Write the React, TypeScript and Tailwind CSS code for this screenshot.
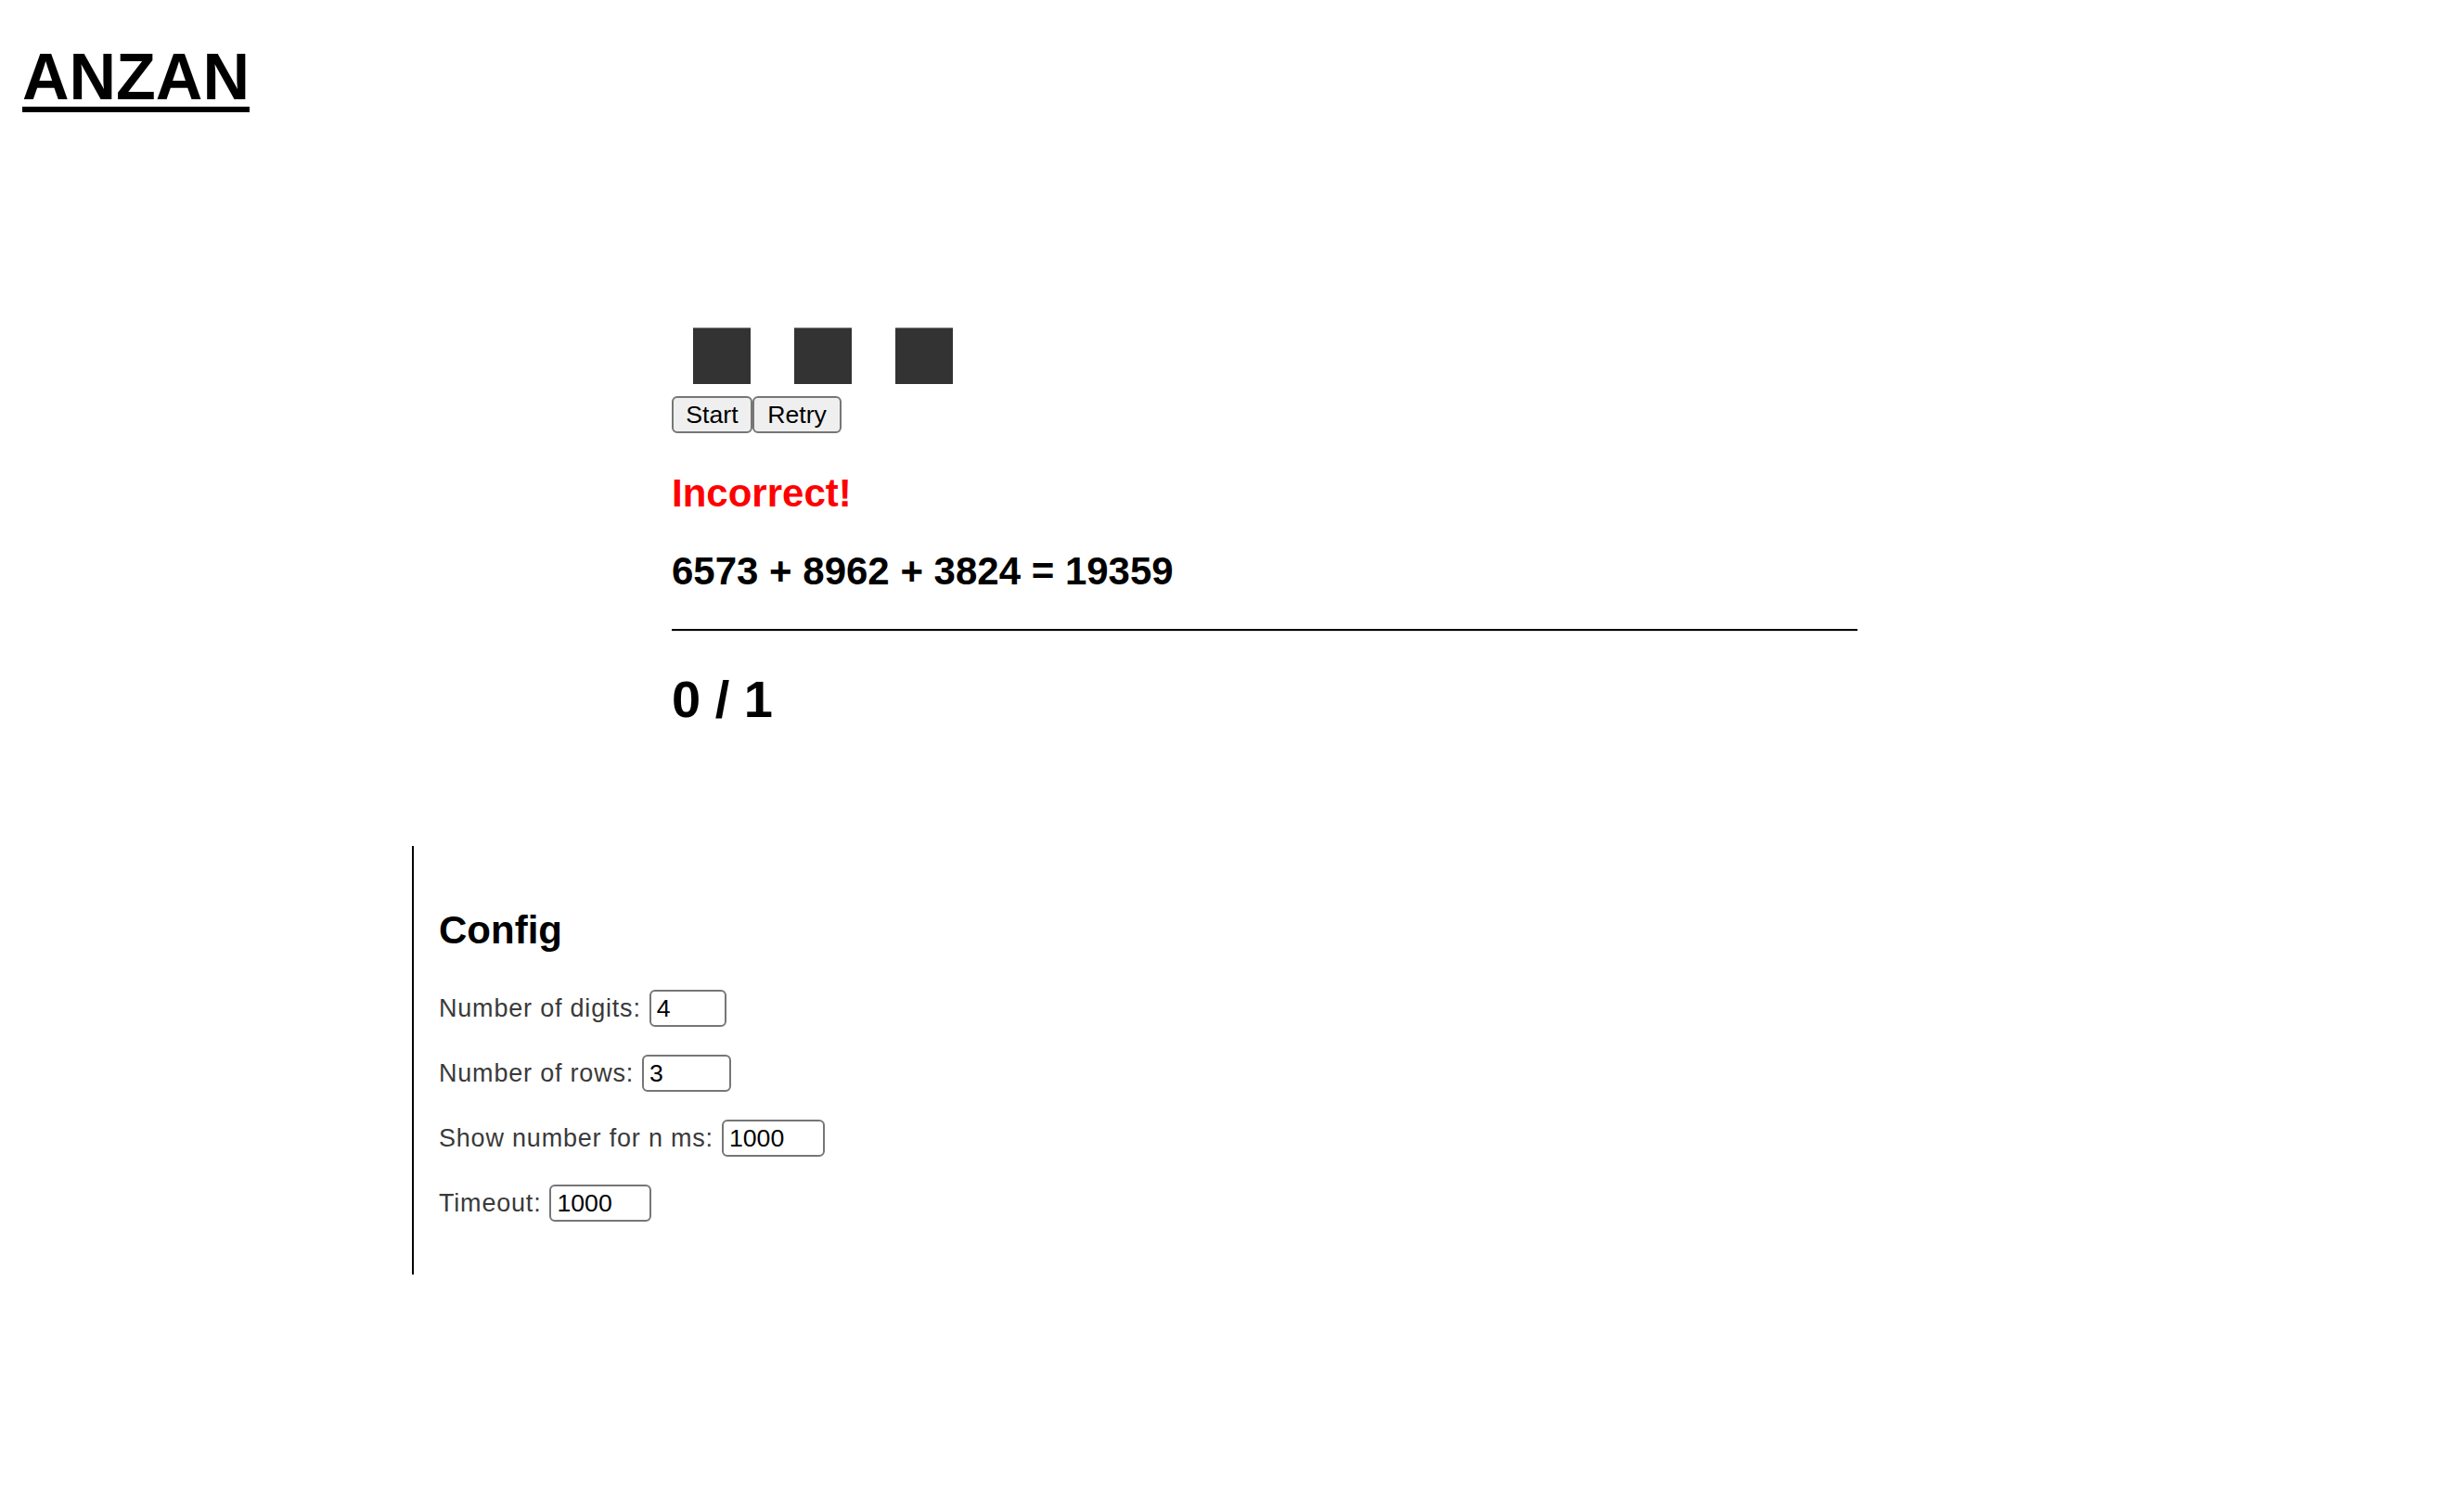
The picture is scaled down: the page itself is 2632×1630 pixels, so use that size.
const squares = [0, 1, 2];

const fields = [
  { label: "Number of digits:", value: "4", width: "w-[83px]" },
  { label: "Number of rows:", value: "3", width: "w-[96px]" },
  { label: "Show number for n ms:", value: "1000", width: "w-[111px]" },
  { label: "Timeout:", value: "1000", width: "w-[110px]" },
];

export default function App() {
  return (
    <div className="min-h-screen bg-white text-black font-['Liberation_Sans',Arial,sans-serif]">
      {/* Header */}
      <header className="pl-[24px] pt-[48px]">
        <h1 className="text-[70px] leading-none font-bold underline decoration-[6px] underline-offset-[8px]">
          ANZAN
        </h1>
      </header>

      {/* Game */}
      <section className="ml-[724px] w-[1278px] mt-[235px]">
        <div className="flex gap-[47px] pl-[23px]">
          {squares.map((i) => (
            <div key={i} className="w-[62px] h-[61px] bg-[#333] border-t border-[#888]" />
          ))}
        </div>

        <div className="flex mt-[13px]">
          <button className="w-[87px] h-[40px] bg-[#efefef] border-2 border-[#767676] rounded-[6px] text-[26.67px] leading-none">
            Start
          </button>
          <button className="w-[96px] h-[40px] bg-[#efefef] border-2 border-[#767676] rounded-[6px] text-[26.67px] leading-none">
            Retry
          </button>
        </div>

        <h2 className="mt-[44px] text-[42px] leading-none font-bold text-[#ff0000]">Incorrect!</h2>
        <h2 className="mt-[42px] text-[42px] leading-none font-bold">6573 + 8962 + 3824 = 19359</h2>

        <div className="mt-[41px] border-t-2 border-black border-b border-b-[#e5e5e5]" />

        <h2 className="mt-[45px] text-[56px] leading-none font-bold">0 / 1</h2>
      </section>

      {/* Config */}
      <section className="ml-[444px] mt-[130px] border-l-2 border-black pl-[27px] pt-[70px] pb-[57px]">
        <h3 className="text-[42px] leading-none font-bold">Config</h3>
        <div className="mt-[43px] flex flex-col gap-[30px]">
          {fields.map((f) => (
            <div key={f.label} className="flex items-center h-[40px]">
              <label className="text-[27px] leading-none text-[#3a3a3a] tracking-[0.8px]">
                {f.label}
              </label>
              <input
                readOnly
                value={f.value}
                className={`${f.width} ml-[9px] h-[40px] border-2 border-[#767676] rounded-[6px] pl-[6px] text-[26.67px] leading-none text-black`}
              />
            </div>
          ))}
        </div>
      </section>
    </div>
  );
}
